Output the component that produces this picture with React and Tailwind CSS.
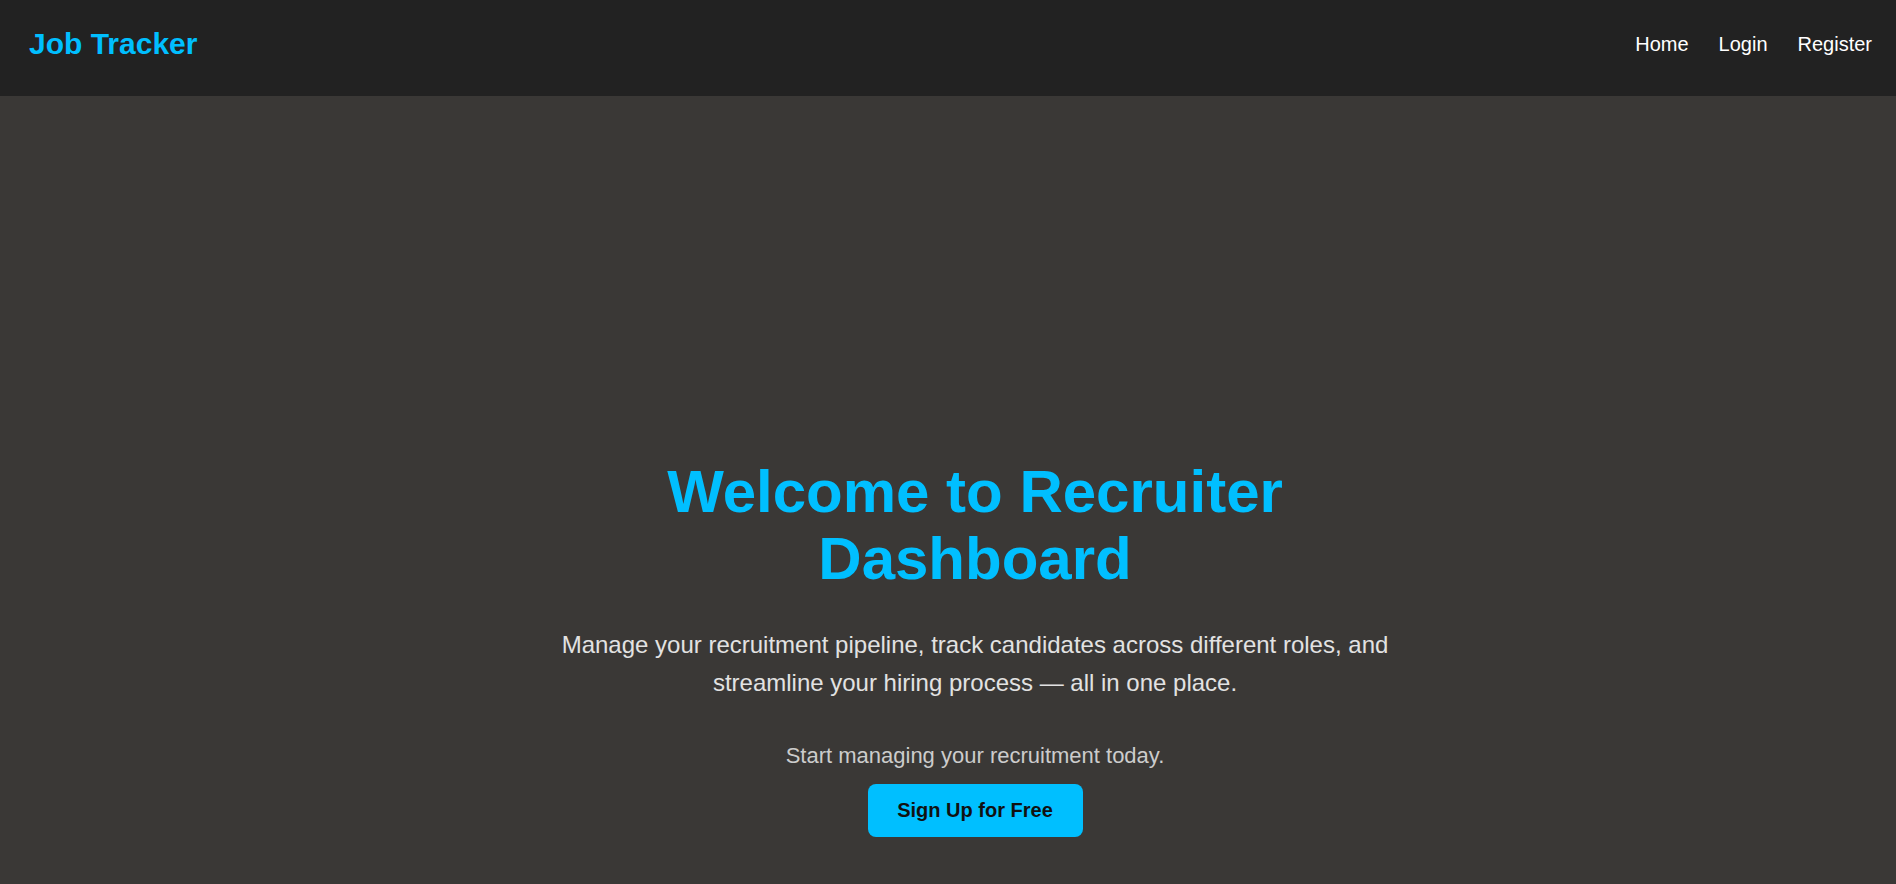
export default function App() {
  return (
    <div className="min-h-screen bg-[#3a3836] font-['Liberation_Sans',Arial,sans-serif]">
      <header className="h-[96px] bg-[#222222] flex items-center justify-between pl-[29px] pr-[24px] pb-[8px]">
        <div className="text-[30px] font-bold text-[#00bfff] leading-none">Job Tracker</div>
        <nav className="flex items-center gap-[30px] text-[20px] text-white">
          <a href="#">Home</a>
          <a href="#">Login</a>
          <a href="#">Register</a>
        </nav>
      </header>

      <main className="flex flex-col items-center pt-[362px] pl-[54px] pb-10">
        <div className="max-w-[900px] flex flex-col items-center text-center">
          <h1 className="text-[60px] font-bold leading-[67px] text-[#00bfff]">
            Welcome to Recruiter Dashboard
          </h1>
          <p className="mt-[34px] text-[24px] leading-[38.4px] text-[#e2e2e2]">
            Manage your recruitment pipeline, track candidates across different roles, and streamline your hiring
            process — all in one place.
          </p>
          <p className="mt-[40px] text-[22px] leading-[25px] text-[#cccccc]">Start managing your recruitment today.</p>
          <button className="mt-[16px] w-[215px] h-[53px] rounded-[8px] bg-[#00bfff] text-[20px] font-bold text-[#111111]">
            Sign Up for Free
          </button>
        </div>
      </main>
    </div>
  )
}
